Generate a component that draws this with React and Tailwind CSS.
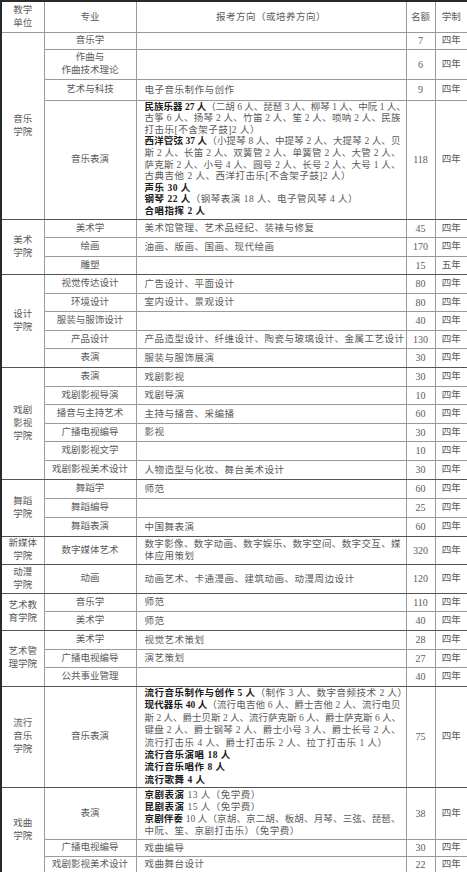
const FONT = { fontFamily: '"Liberation Serif", "Noto Sans CJK SC", serif' };

// line: [bold, normal, justify]
const L = (b, t = '', j = false) => ({ b, t, j });

const groups = [
  {
    unit: ['音乐', '学院'],
    rows: [
      { m: ['音乐学'], n: 7, h: 17 },
      { m: ['作曲与', '作曲技术理论'], n: 6, h: 30 },
      { m: ['艺术与科技'], d: [L('', '电子音乐制作与创作')], n: 9, h: 21 },
      {
        m: ['音乐表演'],
        n: 118,
        h: 119,
        lh: 'leading-[11.6px]',
        d: [
          L('民族乐器 27 人', '（二胡 6 人、琵琶 3 人、柳琴 1 人、中阮 1 人、', true),
          L('', '古筝 6 人、扬琴 2 人、竹笛 2 人、笙 2 人、唢呐 2 人、民族', true),
          L('', '打击乐[不含架子鼓]2 人）'),
          L('西洋管弦 37 人', '（小提琴 8 人、中提琴 2 人、大提琴 2 人、贝', true),
          L('', '斯 2 人、长笛 2 人、双簧管 2 人、单簧管 2 人、大管 2 人、', true),
          L('', '萨克斯 2 人、小号 4 人、圆号 2 人、长号 2 人、大号 1 人、', true),
          L('', '古典吉他 2 人、西洋打击乐[不含架子鼓]2 人）'),
          L('声乐 30 人'),
          L('钢琴 22 人', '（钢琴表演 18 人、电子管风琴 4 人）'),
          L('合唱指挥 2 人'),
        ],
      },
    ],
  },
  {
    unit: ['美术', '学院'],
    rows: [
      { m: ['美术学'], d: [L('', '美术馆管理、艺术品经纪、装裱与修复')], n: 45, h: 18 },
      { m: ['绘画'], d: [L('', '油画、版画、国画、现代绘画')], n: 170, h: 19 },
      { m: ['雕塑'], n: 15, y: '五年', h: 18 },
    ],
  },
  {
    unit: ['设计', '学院'],
    rows: [
      { m: ['视觉传达设计'], d: [L('', '广告设计、平面设计')], n: 80, h: 19 },
      { m: ['环境设计'], d: [L('', '室内设计、景观设计')], n: 80, h: 18 },
      { m: ['服装与服饰设计'], n: 40, h: 19 },
      { m: ['产品设计'], d: [L('', '产品造型设计、纤维设计、陶瓷与玻璃设计、金属工艺设计')], n: 130, h: 18 },
      { m: ['表演'], d: [L('', '服装与服饰展演')], n: 30, h: 19 },
    ],
  },
  {
    unit: ['戏剧', '影视', '学院'],
    rows: [
      { m: ['表演'], d: [L('', '戏剧影视')], n: 30, h: 19 },
      { m: ['戏剧影视导演'], d: [L('', '戏剧导演')], n: 10, h: 18 },
      { m: ['播音与主持艺术'], d: [L('', '主持与播音、采编播')], n: 60, h: 19 },
      { m: ['广播电视编导'], d: [L('', '影视')], n: 30, h: 18 },
      { m: ['戏剧影视文学'], n: 10, h: 19 },
      { m: ['戏剧影视美术设计'], d: [L('', '人物造型与化妆、舞台美术设计')], n: 30, h: 19 },
    ],
  },
  {
    unit: ['舞蹈', '学院'],
    rows: [
      { m: ['舞蹈学'], d: [L('', '师范')], n: 60, h: 19 },
      { m: ['舞蹈编导'], n: 25, h: 19 },
      { m: ['舞蹈表演'], d: [L('', '中国舞表演')], n: 60, h: 19 },
    ],
  },
  {
    unit: ['新媒体', '学院'],
    rows: [
      {
        m: ['数字媒体艺术'],
        n: 320,
        h: 28,
        d: [L('', '数字影像、数字动画、数字娱乐、数字空间、数字交互、媒', true), L('', '体应用策划')],
      },
    ],
  },
  {
    unit: ['动漫', '学院'],
    rows: [{ m: ['动画'], d: [L('', '动画艺术、卡通漫画、建筑动画、动漫周边设计')], n: 120, h: 29 }],
  },
  {
    unit: ['艺术教', '育学院'],
    rows: [
      { m: ['音乐学'], d: [L('', '师范')], n: 110, h: 18 },
      { m: ['美术学'], d: [L('', '师范')], n: 40, h: 19 },
    ],
  },
  {
    unit: ['艺术管', '理学院'],
    rows: [
      { m: ['美术学'], d: [L('', '视觉艺术策划')], n: 28, h: 19 },
      { m: ['广播电视编导'], d: [L('', '演艺策划')], n: 27, h: 18 },
      { m: ['公共事业管理'], n: 40, h: 19 },
    ],
  },
  {
    unit: ['流行', '音乐', '学院'],
    rows: [
      {
        m: ['音乐表演'],
        n: 75,
        h: 101,
        lh: 'leading-[12.4px]',
        d: [
          L('流行音乐制作与创作 5 人', '（制作 3 人、数字音频技术 2 人）'),
          L('现代器乐 40 人', '（流行电吉他 6 人、爵士吉他 2 人、流行电贝', true),
          L('', '斯 2 人、爵士贝斯 2 人、流行萨克斯 6 人、爵士萨克斯 6 人、', true),
          L('', '键盘 2 人、爵士钢琴 2 人、爵士小号 3 人、爵士长号 2 人、', true),
          L('', '流行打击乐 4 人、爵士打击乐 2 人、拉丁打击乐 1 人）'),
          L('流行音乐演唱 18 人'),
          L('流行音乐唱作 8 人'),
          L('流行歌舞 4 人'),
        ],
      },
    ],
  },
  {
    unit: ['戏曲', '学院'],
    rows: [
      {
        m: ['表演'],
        n: 38,
        h: 52,
        lh: 'leading-[12px]',
        d: [
          L('京剧表演', ' 13 人（免学费）'),
          L('昆剧表演', ' 15 人（免学费）'),
          L('京剧伴奏', ' 10 人（京胡、京二胡、板胡、月琴、三弦、琵琶、', true),
          L('', '中阮、笙、京剧打击乐）（免学费）'),
        ],
      },
      { m: ['广播电视编导'], d: [L('', '戏曲编导')], n: 30, h: 17 },
      { m: ['戏剧影视美术设计'], d: [L('', '戏曲舞台设计')], n: 22, h: 17 },
    ],
  },
];

function Desc({ lines, lh }) {
  if (!lines) return null;
  return (
    <div className={`${lh || 'leading-[12px]'}`}>
      {lines.map((l, i) => (
        <div
          key={i}
          className={`whitespace-nowrap ${
            l.j ? '[text-align-last:justify] text-justify' : 'tracking-[0.5px]'
          }`}
        >
          {l.b && <span className="font-bold text-[#1a1a1a]">{l.b}</span>}
          {l.t}
        </div>
      ))}
    </div>
  );
}

export default function App() {
  const cell = 'border border-[#9a9a9a] p-0';
  return (
    <div className="w-[467px] bg-white" style={FONT}>
      <table className="w-[467px] table-fixed border-collapse border-2 border-[#2a2a2a] text-[9.5px] text-[#5a5a5a]">
        <colgroup>
          <col className="w-[43px]" />
          <col className="w-[92px]" />
          <col className="w-[270px]" />
          <col className="w-[29px]" />
          <col className="w-[33px]" />
        </colgroup>
        <thead>
          <tr className="h-[31px]">
            <th className={`${cell} font-normal leading-[13px]`}>
              教学
              <br />
              单位
            </th>
            <th className={`${cell} font-normal`}>专业</th>
            <th className={`${cell} font-normal tracking-[0.5px]`}>报考方向（或培养方向）</th>
            <th className={`${cell} font-normal`}>名额</th>
            <th className={`${cell} font-normal`}>学制</th>
          </tr>
        </thead>
        <tbody>
          {groups.map((g, gi) =>
            g.rows.map((r, ri) => {
              const last = ri === g.rows.length - 1;
              const sep = last ? 'border-b-[#555]' : '';
              return (
                <tr key={`${gi}-${ri}`} style={{ height: r.h }}>
                  {ri === 0 && (
                    <td
                      rowSpan={g.rows.length}
                      className={`${cell} border-b-[#555] text-center leading-[13px]`}
                    >
                      {g.unit.map((u) => (
                        <div key={u}>{u}</div>
                      ))}
                    </td>
                  )}
                  <td className={`${cell} ${sep} text-center leading-[13px]`}>
                    {r.m.map((u) => (
                      <div key={u} className="whitespace-nowrap">
                        {u}
                      </div>
                    ))}
                  </td>
                  <td className={`${cell} ${sep} pl-[8px] pr-[5px] text-left`}>
                    <Desc lines={r.d} lh={r.lh} />
                  </td>
                  <td className={`${cell} ${sep} text-center text-[10px]`}>{r.n}</td>
                  <td className={`${cell} ${sep} text-center`}>{r.y || '四年'}</td>
                </tr>
              );
            })
          )}
        </tbody>
      </table>
    </div>
  );
}
